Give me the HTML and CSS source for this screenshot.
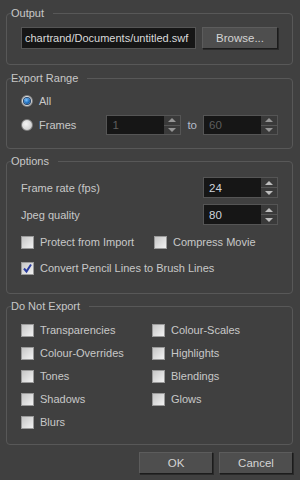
FILE: index.html
```html
<html lang="en">
  <head>
    <meta charset="UTF-8" />
    <title>Export to SWF</title>
    <link rel="stylesheet" href="styles.css">
  </head>
  <body>
    <div class="dialog">
      <fieldset class="group output">
        <legend>Output</legend>
        <div class="row">
          <input class="path" type="text" value="chartrand/Documents/untitled.swf" />
          <button class="btn browse">Browse...</button>
        </div>
      </fieldset>

      <fieldset class="group range">
        <legend>Export Range</legend>
        <label class="row opt">
          <span class="radio on"></span> All
        </label>
        <div class="row opt">
          <span class="radio"></span> Frames
          <div class="spin disabled push">
            <span class="field">1</span>
            <span class="arrows"><i class="up"></i><i class="down"></i></span>
          </div>
          <span class="to">to</span>
          <div class="spin disabled">
            <span class="field">60</span>
            <span class="arrows"><i class="up"></i><i class="down"></i></span>
          </div>
        </div>
      </fieldset>

      <fieldset class="group options">
        <legend>Options</legend>
        <div class="row field-row">
          <span>Frame rate (fps)</span>
          <div class="spin push">
            <span class="field">24</span>
            <span class="arrows"><i class="up"></i><i class="down"></i></span>
          </div>
        </div>
        <div class="row field-row">
          <span>Jpeg quality</span>
          <div class="spin push">
            <span class="field">80</span>
            <span class="arrows"><i class="up"></i><i class="down"></i></span>
          </div>
        </div>
        <div class="grid wide">
          <label class="opt"><span class="check"></span> Protect from Import</label>
          <label class="opt"><span class="check"></span> Compress Movie</label>
        </div>
        <label class="row opt">
          <span class="check on">
            <svg width="11" height="11" viewBox="0 0 11 11"><path d="M2 5.5 L4.5 8.5 L9 1.5" fill="none" stroke="#2a3c9e" stroke-width="2" /></svg>
          </span>
          Convert Pencil Lines to Brush Lines
        </label>
      </fieldset>

      <fieldset class="group skip">
        <legend>Do Not Export</legend>
        <div class="grid">
          <label class="opt"><span class="check"></span> Transparencies</label>
          <label class="opt"><span class="check"></span> Colour-Scales</label>
          <label class="opt"><span class="check"></span> Colour-Overrides</label>
          <label class="opt"><span class="check"></span> Highlights</label>
          <label class="opt"><span class="check"></span> Tones</label>
          <label class="opt"><span class="check"></span> Blendings</label>
          <label class="opt"><span class="check"></span> Shadows</label>
          <label class="opt"><span class="check"></span> Glows</label>
          <label class="opt"><span class="check"></span> Blurs</label>
        </div>
      </fieldset>

      <div class="actions">
        <button class="btn">OK</button>
        <button class="btn">Cancel</button>
      </div>
    </div>
  </body>
</html>
```

FILE: styles.css
```css
body {
  margin: 0;
  background: #404040;
}
body,
button,
input {
  font-family: "Liberation Sans", Arial, sans-serif;
  font-size: 11px;
  color: #c8c8c8;
}
.dialog {
  padding: 7px 7px 0 6px;
  display: flex;
  flex-direction: column;
}
.group {
  margin: 0 0 6px 0;
  border: 1px solid #585858;
  border-radius: 4px;
  padding: 0 14px 14px 14px;
  display: flex;
  flex-direction: column;
}
.group legend {
  line-height: 13px;
  padding: 0 9px 0 0;
  margin-left: -10px;
  color: #c8c8c8;
}
.row {
  display: flex;
  align-items: center;
}
.push {
  margin-left: auto;
}

/* output */
.output {
  padding-top: 7px;
  padding-bottom: 15px;
  margin-bottom: 7px;
}
.output .row {
  gap: 6px;
}
.path {
  flex: 1;
  min-width: 0;
  height: 22px;
  padding: 0 3px;
  background: #161616;
  border: 1px solid #555;
  outline: none;
  font-size: 11px;
  color: #dadada;
}
.btn {
  height: 22px;
  width: 75px;
  padding: 0;
  background: #4e4e4e;
  border: 1px solid #5c5c5c;
  border-right-color: #1c1c1c;
  border-bottom-color: #1c1c1c;
  box-shadow: 1px 1px 0 #2a2a2a;
  font-size: 11.5px;
  color: #d4d4d4;
}
.browse {
  width: 76px;
}

/* export range */
.range {
  padding-top: 6px;
  padding-bottom: 13px;
  gap: 4px;
}
.range .row {
  height: 20px;
}
.opt {
  display: flex;
  align-items: center;
  gap: 6px;
  height: 20px;
}
.radio {
  width: 12px;
  height: 12px;
  border-radius: 50%;
  border: 1px solid #7e7e7e;
  background: radial-gradient(circle at 40% 40%, #f4f4f4, #c4c4c4);
  display: flex;
  align-items: center;
  justify-content: center;
  box-sizing: border-box;
  flex: none;
}
.radio.on::after {
  content: "";
  width: 6px;
  height: 6px;
  border-radius: 50%;
  background: radial-gradient(circle at 40% 35%, #7cc4ff, #1566b8 60%, #0b3f78);
  box-shadow: 0 0 0 1px #26456a;
}
.to {
  margin: 0;
  font-size: 11.5px;
  color: #b4bccb;
}

/* spin box */
.spin {
  width: 75px;
  height: 21px;
  display: flex;
  background: #161616;
  border: 1px solid #555;
  box-sizing: border-box;
  flex: none;
}
.range .spin {
  height: 20px;
}
.spin .field {
  flex: 1;
  padding-left: 5px;
  display: flex;
  align-items: center;
  font-size: 11.5px;
  color: #cfd4dc;
}
.spin.disabled .field {
  color: #5e5e5e;
}
.arrows {
  width: 16px;
  display: flex;
  flex-direction: column;
  background: #555;
  gap: 1px;
}
.arrows i {
  flex: 1;
  background: #3a3a3a;
  display: flex;
  align-items: center;
  justify-content: center;
}
.arrows i::after {
  content: "";
  border-left: 4px solid transparent;
  border-right: 4px solid transparent;
}
.arrows .up::after {
  border-bottom: 4px solid #bdbdbd;
}
.arrows .down::after {
  border-top: 4px solid #bdbdbd;
}
.spin.disabled .arrows i::after {
  opacity: 0.7;
}

/* options */
.options {
  padding-top: 9px;
  padding-bottom: 15px;
}
.field-row {
  height: 21px;
  margin-bottom: 6px;
}
.options .grid {
  margin-top: 1px;
  margin-bottom: 6px;
}
.check {
  width: 13px;
  height: 13px;
  box-sizing: border-box;
  border: 1px solid #9a9a9a;
  background: linear-gradient(135deg, #c6c6c6, #f2f2f2);
  display: flex;
  align-items: center;
  justify-content: center;
  flex: none;
}
.grid {
  display: grid;
  grid-template-columns: 131px 1fr;
  row-gap: 3px;
}
.grid.wide {
  grid-template-columns: 133px 1fr;
}

/* do not export */
.skip {
  padding-top: 7px;
  padding-bottom: 12px;
  margin-bottom: 7px;
}

.actions {
  display: flex;
  justify-content: flex-end;
  gap: 6px;
}
.actions .btn {
  width: 74px;
}
```
